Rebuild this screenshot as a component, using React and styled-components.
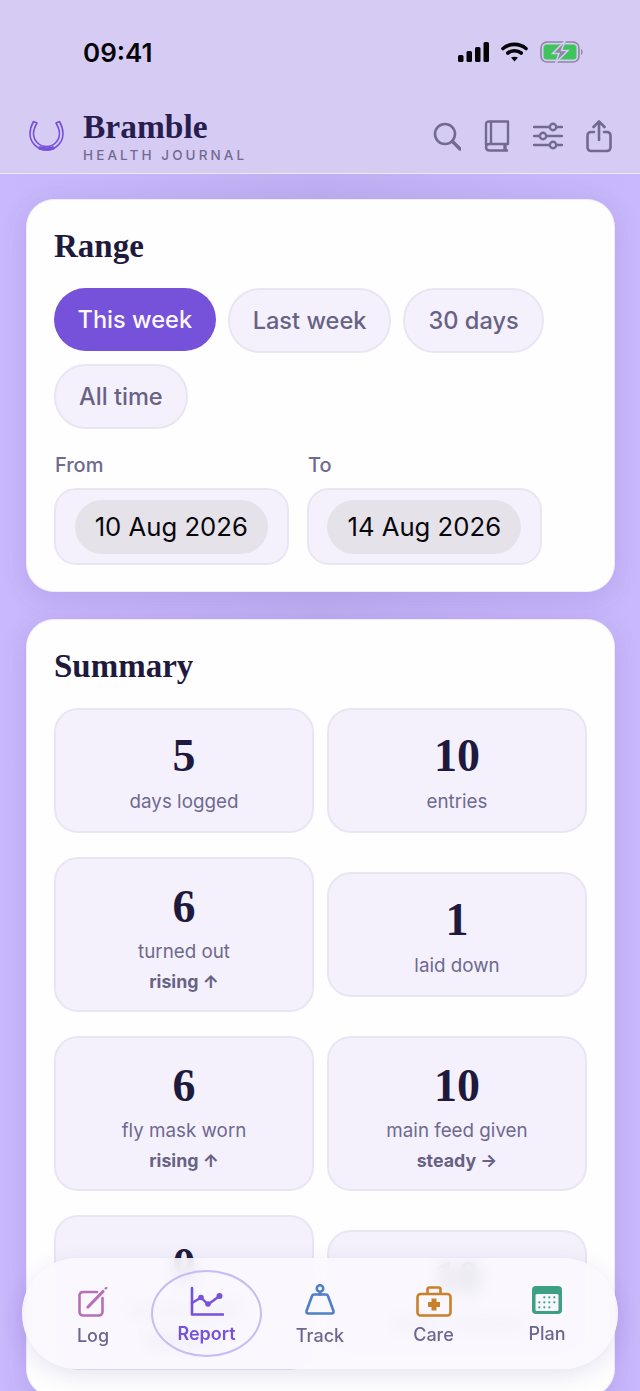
import React from 'react';
import styled, { createGlobalStyle } from 'styled-components';

const GlobalStyle = createGlobalStyle`
  html, body {
    margin: 0;
    padding: 0;
    height: 100%;
    overflow: hidden;
    background: #c4b2f6;
    font-family: Inter, "Liberation Sans", sans-serif;
  }
  #root { height: 100%; }
  * { box-sizing: border-box; }
`;

const Screen = styled.div`
  position: relative;
  display: flex;
  flex-direction: column;
  width: 640px;
  height: 1391px;
  overflow: hidden;
  background: linear-gradient(90deg, #c9b8fb 0%, #bfaef0 50%, #c9b8fb 100%);
`;

const Header = styled.header`
  flex: none;
  height: 174px;
  background: #d6ccf3;
  border-bottom: 1px solid #ede8fb;
`;

const StatusBar = styled.div`
  display: flex;
  align-items: center;
  justify-content: space-between;
  height: 26px;
  margin-top: 39px;
  padding: 0 56px 0 83px;
`;

const Clock = styled.span`
  font-size: 26px;
  font-weight: 600;
  color: #050508;
`;

const StatusIcons = styled.div`
  display: flex;
  align-items: center;
  gap: 12px;
`;

const AppBar = styled.div`
  display: flex;
  align-items: center;
  justify-content: space-between;
  margin-top: 43px;
  padding: 0 28px 0 29px;
`;

const Brand = styled.div`
  display: flex;
  align-items: center;
  gap: 18px;
`;

const BrandText = styled.div`
  display: flex;
  flex-direction: column;
`;

const BrandName = styled.span`
  font-family: "Liberation Serif", serif;
  font-size: 33.5px;
  line-height: 38px;
  font-weight: 700;
  color: #271d4e;
`;

const BrandSub = styled.span`
  font-size: 13.5px;
  line-height: 18px;
  font-weight: 500;
  letter-spacing: 3.1px;
  color: #716a92;
`;

const Actions = styled.div`
  display: flex;
  align-items: center;
  gap: 23px;
`;

const Content = styled.main`
  display: flex;
  flex-direction: column;
  gap: 27px;
  padding: 25px 25px 0 26px;
`;

const Card = styled.section`
  background: #fefeff;
  border: 1px solid #f0ecfa;
  border-radius: 28px;
  padding: 28px 27px 26px;
  box-shadow: 0 6px 26px rgba(100, 70, 190, 0.16);
`;

const CardTitle = styled.h2`
  margin: 0;
  font-family: "Liberation Serif", serif;
  font-size: 33px;
  line-height: 36px;
  font-weight: 700;
  color: #1f1a3d;
`;

const Chips = styled.div`
  display: flex;
  flex-wrap: wrap;
  gap: 11px 12px;
  margin-top: 24px;
`;

const Chip = styled.button`
  height: ${({ $active }) => ($active ? '63px' : '65px')};
  padding: 0 ${({ $active }) => ($active ? '23.5px' : '23px')};
  border-radius: 32px;
  border: ${({ $active }) => ($active ? 'none' : '2px solid #e9e6f3')};
  background: ${({ $active }) => ($active ? '#7651d9' : '#f4f1fc')};
  color: ${({ $active }) => ($active ? '#fbf9ff' : '#686285')};
  font-family: Inter, sans-serif;
  font-size: 23.6px;
  font-weight: 500;
`;

const Dates = styled.div`
  display: flex;
  gap: 18.5px;
  margin-top: 24px;
`;

const DateField = styled.div`
  display: flex;
  flex-direction: column;
  gap: 11px;
`;

const DateLabel = styled.span`
  padding-left: 1px;
  font-size: 20px;
  line-height: 24px;
  font-weight: 500;
  color: #706a8e;
`;

const DateBox = styled.div`
  display: flex;
  justify-content: center;
  align-items: center;
  width: 234.5px;
  height: 77px;
  border: 2px solid #e9e6f3;
  border-radius: 22px;
  background: #f4f1fc;
`;

const DatePill = styled.span`
  display: flex;
  align-items: center;
  height: 54px;
  padding: 0 20px;
  border-radius: 27px;
  background: #e5e2ea;
  font-size: 25.7px;
  color: #08080c;
`;

const StatGrid = styled.div`
  display: grid;
  grid-template-columns: 260px 260px;
  justify-content: space-between;
  align-items: center;
  row-gap: 24px;
  width: 533px;
  margin-top: 24px;
`;

const Stat = styled.div`
  display: flex;
  flex-direction: column;
  align-items: center;
  height: ${({ $trend }) => ($trend ? '155px' : '125px')};
  padding-top: ${({ $trend }) => ($trend ? '22px' : '20px')};
  border: 2px solid #e9e6f3;
  border-radius: 24px;
  background: #f4f1fc;
`;

const StatValue = styled.span`
  font-family: "Liberation Serif", serif;
  font-size: 46px;
  line-height: 52px;
  font-weight: 700;
  color: #1f1a3d;
`;

const StatLabel = styled.span`
  margin-top: ${({ $trend }) => ($trend ? '6px' : '7px')};
  font-size: 18.8px;
  line-height: 26px;
  color: #6f6990;
`;

const StatTrend = styled.span`
  margin-top: 5px;
  font-size: 17.8px;
  line-height: 24px;
  font-weight: 700;
  color: #686285;
`;

const TabBar = styled.nav`
  position: absolute;
  left: 22px;
  top: 1258px;
  display: grid;
  grid-template-columns: repeat(5, 113.5px);
  justify-content: center;
  width: 596px;
  height: 111px;
  border-radius: 56px;
  background: rgba(250, 248, 254, 0.88);
  backdrop-filter: blur(8px);
  box-shadow: 0 6px 22px rgba(60, 40, 130, 0.12);
`;

const Tab = styled.div`
  position: relative;
  display: flex;
  flex-direction: column;
  align-items: center;
  padding-top: ${({ $top }) => $top}px;
  gap: ${({ $gap }) => $gap}px;
  font-size: 18px;
  line-height: 22px;
  font-weight: ${({ $active }) => ($active ? 600 : 500)};
  color: ${({ $active }) => ($active ? '#7651d9' : '#6c6690')};
`;

const ActiveRing = styled.span`
  position: absolute;
  left: 1px;
  top: 12px;
  width: 111px;
  height: 87px;
  border: 2px solid #c9bbf3;
  border-radius: 50%;
`;

const TabIcon = styled.svg`
  position: relative;
  display: block;
`;

const TabLabel = styled.span`
  position: relative;
`;

const stats = [
  { value: '5', label: 'days logged' },
  { value: '10', label: 'entries' },
  { value: '6', label: 'turned out', trend: 'rising ↑' },
  { value: '1', label: 'laid down' },
  { value: '6', label: 'fly mask worn', trend: 'rising ↑' },
  { value: '10', label: 'main feed given', trend: 'steady →' },
  { value: '0', label: 'rug changed', trend: 'falling ↓' },
  { value: '10', label: 'water checked' },
];

// rows of the little calendar in the Plan tab
const calendarDots = [
  { y: 11.3, xs: [12.3, 17.3, 22.3] },
  { y: 16.3, xs: [7.3, 12.3, 17.3, 22.3] },
  { y: 21.3, xs: [7.3, 12.3, 17.3] },
];

const App = () => (
  <Screen>
    <GlobalStyle />
    <Header>
      <StatusBar>
        <Clock>09:41</Clock>
        <StatusIcons>
          <svg width="31" height="20" viewBox="0 0 31 20" fill="#050508">
            <rect x="0" y="13" width="5.5" height="7" rx="1.5" />
            <rect x="8.5" y="9" width="5.5" height="11" rx="1.5" />
            <rect x="17" y="5" width="5.5" height="15" rx="1.5" />
            <rect x="25.5" y="0" width="5.5" height="20" rx="1.5" />
          </svg>
          <svg width="27" height="20" viewBox="0 0 27 20" fill="none" stroke="#050508" strokeWidth="3.6" strokeLinecap="round">
            <path d="M2 6.5 C8.5 1, 18.5 1, 25 6.5" />
            <path d="M6.8 11 C10.5 8, 16.5 8, 20.2 11" />
            <path d="M13.5 19.5 L10 15.6 C12 14.3, 15 14.3, 17 15.6 Z" fill="#050508" stroke="none" />
          </svg>
          <svg width="44" height="22" viewBox="0 0 44 22">
            <rect x="1" y="1" width="38" height="20" rx="6" fill="none" stroke="#8d86a4" strokeWidth="1.6" />
            <rect x="3.5" y="3.5" width="33" height="15" rx="3.5" fill="#3fc45c" />
            <path d="M41 8 C43 8.5 43 13.5 41 14 Z" fill="#8d86a4" />
            <path d="M25 0 L12.5 12.5 H19 L15.5 22 L28 9.5 H21.5 Z" fill="#8d86a4" stroke="#d6ccf3" strokeWidth="1.5" />
          </svg>
        </StatusIcons>
      </StatusBar>
      <AppBar>
        <Brand>
          <svg width="36" height="34" viewBox="0 0 36 34" fill="none" stroke="#7651d9" strokeLinecap="round" strokeLinejoin="round">
            <path d="M8 4 L4.5 2.5 C2 7 1 11 1 14.5 A16.5 16.5 0 0 0 34 14.5 C34 11 33 7 30.5 2.5 L27 4 C29 7.5 30.5 11 30.5 14.5 A13 13 0 0 1 4.5 14.5 C4.5 11 6 7.5 8 4 Z" strokeWidth="1.6" />
            <path d="M11 29 Q17.5 31 24 29" strokeWidth="3.6" />
          </svg>
          <BrandText>
            <BrandName>Bramble</BrandName>
            <BrandSub>HEALTH JOURNAL</BrandSub>
          </BrandText>
        </Brand>
        <Actions>
          <svg width="28" height="30" viewBox="0 0 28 30" fill="none" stroke="#716a92" strokeWidth="2.6" strokeLinecap="round">
            <circle cx="12" cy="13" r="10" />
            <path d="M19.5 20.5 L27 28" strokeWidth="3.4" />
          </svg>
          <svg width="26" height="32" viewBox="0 0 26 32" fill="none" stroke="#716a92" strokeWidth="2.4" strokeLinejoin="round">
            <path d="M2 25 V4 A2.5 2.5 0 0 1 4.5 1.5 H24 V24 H5.5 C3 24 2 25 2 27 C2 29.5 3.5 30.5 5.5 30.5 H24" />
            <path d="M7 2 V24" />
            <path d="M21 24 V30.5" strokeWidth="3.4" />
          </svg>
          <svg width="30" height="28" viewBox="0 0 30 28" fill="none" stroke="#716a92" strokeWidth="2.4" strokeLinecap="round">
            <path d="M1 5 H16 M24 5 H29" />
            <path d="M1 14 H6 M14 14 H29" />
            <path d="M1 23 H16 M24 23 H29" />
            <circle cx="20" cy="5" r="3.2" />
            <circle cx="10" cy="14" r="3.2" />
            <circle cx="20" cy="23" r="3.2" />
          </svg>
          <svg width="26" height="33" viewBox="0 0 26 33" fill="none" stroke="#716a92" strokeWidth="2.6" strokeLinecap="round" strokeLinejoin="round">
            <path d="M8 12 H5 A3.5 3.5 0 0 0 1.5 15.5 V27.5 A3.5 3.5 0 0 0 5 31 H21 A3.5 3.5 0 0 0 24.5 27.5 V15.5 A3.5 3.5 0 0 0 21 12 H18" />
            <path d="M13 20 V2 M7.5 7 L13 1.5 L18.5 7" />
          </svg>
        </Actions>
      </AppBar>
    </Header>
    <Content>
      <Card>
        <CardTitle>Range</CardTitle>
        <Chips>
          <Chip $active>This week</Chip>
          <Chip>Last week</Chip>
          <Chip>30 days</Chip>
          <Chip>All time</Chip>
        </Chips>
        <Dates>
          <DateField>
            <DateLabel>From</DateLabel>
            <DateBox><DatePill>10 Aug 2026</DatePill></DateBox>
          </DateField>
          <DateField>
            <DateLabel>To</DateLabel>
            <DateBox><DatePill>14 Aug 2026</DatePill></DateBox>
          </DateField>
        </Dates>
      </Card>
      <Card>
        <CardTitle>Summary</CardTitle>
        <StatGrid>
          {stats.map((stat, i) => (
            <Stat key={i} $trend={!!stat.trend}>
              <StatValue>{stat.value}</StatValue>
              <StatLabel $trend={!!stat.trend}>{stat.label}</StatLabel>
              {stat.trend && <StatTrend>{stat.trend}</StatTrend>}
            </Stat>
          ))}
        </StatGrid>
      </Card>
    </Content>
    <TabBar>
      <Tab $top={29} $gap={6}>
        <TabIcon width="32" height="32" viewBox="0 0 32 32" fill="none" stroke="#b86fb8" strokeWidth="2.6" strokeLinecap="round" strokeLinejoin="round">
          <path d="M20 5 H6 A3.5 3.5 0 0 0 2.5 8.5 V25 A3.5 3.5 0 0 0 6 28.5 H22 A3.5 3.5 0 0 0 25.5 25 V11" />
          <path d="M11 20 L26 4.5" strokeWidth="3.2" />
          <path d="M28.5 1.5 L29.5 1" strokeWidth="2" />
        </TabIcon>
        <TabLabel>Log</TabLabel>
      </Tab>
      <Tab $active $top={28} $gap={7}>
        <ActiveRing />
        <TabIcon width="34" height="30" viewBox="0 0 34 30" fill="none" stroke="#7651d9" strokeWidth="2.6" strokeLinecap="round" strokeLinejoin="round">
          <path d="M2 2 V28.5 H33" />
          <path d="M2 17 L11 11.5 L18 18.5 L29.5 10" strokeWidth="2.4" />
          <g fill="#7651d9" stroke="none">
            <circle cx="11" cy="11.5" r="2.8" />
            <circle cx="18" cy="18" r="2.8" />
            <circle cx="29.5" cy="10" r="3" />
          </g>
        </TabIcon>
        <TabLabel>Report</TabLabel>
      </Tab>
      <Tab $top={26} $gap={9}>
        <TabIcon width="32" height="32" viewBox="0 0 32 32" fill="none" stroke="#4f7fc7" strokeWidth="2.6" strokeLinecap="round" strokeLinejoin="round">
          <circle cx="16" cy="4.5" r="3.2" />
          <path d="M16 8 V10.5" />
          <path d="M10 10.5 H22 Q23.5 10.5 24 12 L29.5 27 Q30 29.5 27.5 29.5 H4.5 Q2 29.5 2.5 27 L8 12 Q8.5 10.5 10 10.5 Z" />
        </TabIcon>
        <TabLabel>Track</TabLabel>
      </Tab>
      <Tab $top={28} $gap={7}>
        <TabIcon width="36" height="31" viewBox="0 0 36 31" fill="none" stroke="#c9802a" strokeWidth="2.6" strokeLinejoin="round">
          <rect x="1.5" y="8" width="33" height="21.5" rx="3" />
          <path d="M11.5 8 V3.5 A2 2 0 0 1 13.5 1.5 H22.5 A2 2 0 0 1 24.5 3.5 V8" />
          <path d="M18 12.5 V24.5 M12 18.5 H24" strokeWidth="5" />
        </TabIcon>
        <TabLabel>Care</TabLabel>
      </Tab>
      <Tab $top={28} $gap={9}>
        <TabIcon width="30" height="28" viewBox="0 0 30 28">
          <rect x="0" y="0" width="30" height="28" rx="4" fill="#3da084" />
          <rect x="3.5" y="8" width="23" height="17" rx="1.5" fill="#f7f6fc" />
          <g fill="#3da084">
            {calendarDots.map(row => row.xs.map(x => (
              <circle key={`${x}-${row.y}`} cx={x} cy={row.y} r="1.1" />
            )))}
          </g>
        </TabIcon>
        <TabLabel>Plan</TabLabel>
      </Tab>
    </TabBar>
  </Screen>
);

export default App;
